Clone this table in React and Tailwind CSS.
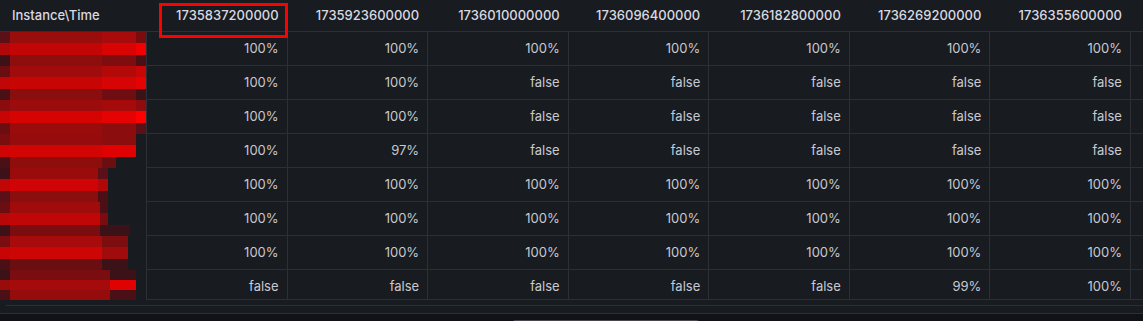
import React from 'react';

const times = [
  '1735837200000',
  '1735923600000',
  '1736010000000',
  '1736096400000',
  '1736182800000',
  '1736269200000',
  '1736355600000',
];

const rows = [
  ['100%', '100%', '100%', '100%', '100%', '100%', '100%'],
  ['100%', '100%', 'false', 'false', 'false', 'false', 'false'],
  ['100%', '100%', 'false', 'false', 'false', 'false', 'false'],
  ['100%', '97%', 'false', 'false', 'false', 'false', 'false'],
  ['100%', '100%', '100%', '100%', '100%', '100%', '100%'],
  ['100%', '100%', '100%', '100%', '100%', '100%', '100%'],
  ['100%', '100%', '100%', '100%', '100%', '100%', '100%'],
  ['false', 'false', 'false', 'false', 'false', '99%', '100%'],
];

// pixelated redaction bands, one set per row: [width, colour] segments
const redact = [
  [
    [[10, 'bg-[#5a1016]'], [92, 'bg-[#9a0d0d]'], [34, 'bg-[#a80b0b]'], [10, 'bg-[#7a0c10]']],
    [[10, 'bg-[#b00808]'], [92, 'bg-[#c20606]'], [34, 'bg-[#d80404]'], [10, 'bg-[#f00000]']],
    [[10, 'bg-[#3c1218]'], [92, 'bg-[#8e0e0e]'], [34, 'bg-[#7e0d10]'], [10, 'bg-[#4a1016]']],
  ],
  [
    [[10, 'bg-[#6a0e12]'], [92, 'bg-[#a00c0c]'], [34, 'bg-[#b40909]'], [10, 'bg-[#c80606]']],
    [[10, 'bg-[#c00606]'], [92, 'bg-[#c80505]'], [34, 'bg-[#d60404]'], [10, 'bg-[#e40202]']],
    [[10, 'bg-[#4a1016]'], [92, 'bg-[#8a0e0e]'], [34, 'bg-[#6e0d12]'], [10, 'bg-[#3a1218]']],
  ],
  [
    [[10, 'bg-[#8a0c0c]'], [92, 'bg-[#9c0c0c]'], [34, 'bg-[#a50b0b]'], [10, 'bg-[#8e0c0e]']],
    [[10, 'bg-[#c80505]'], [92, 'bg-[#d60303]'], [34, 'bg-[#e40202]'], [10, 'bg-[#ff0000]']],
    [[10, 'bg-[#6a0e12]'], [92, 'bg-[#9a0c0c]'], [34, 'bg-[#8c0d0e]'], [10, 'bg-[#5a1016]']],
  ],
  [
    [[10, 'bg-[#7a0d10]'], [92, 'bg-[#960c0c]'], [34, 'bg-[#8c0d0e]'], [0, '']],
    [[10, 'bg-[#d00404]'], [92, 'bg-[#d20404]'], [34, 'bg-[#e00202]'], [0, '']],
    [[10, 'bg-[#4a1016]'], [92, 'bg-[#8e0e0e]'], [14, 'bg-[#6a0e12]'], [0, '']],
  ],
  [
    [[10, 'bg-[#3c1218]'], [88, 'bg-[#9a0c0c]'], [10, 'bg-[#5a1016]'], [0, '']],
    [[10, 'bg-[#c00606]'], [88, 'bg-[#d00404]'], [10, 'bg-[#b00808]'], [0, '']],
    [[10, 'bg-[#5a1016]'], [88, 'bg-[#8a0e0e]'], [10, 'bg-[#4a1016]'], [0, '']],
  ],
  [
    [[10, 'bg-[#6a0e12]'], [90, 'bg-[#a00c0c]'], [8, 'bg-[#4a1016]'], [0, '']],
    [[10, 'bg-[#b80707]'], [90, 'bg-[#c00606]'], [8, 'bg-[#7a0c10]'], [0, '']],
    [[10, 'bg-[#3c1218]'], [90, 'bg-[#7a0d10]'], [30, 'bg-[#3a1218]'], [0, '']],
  ],
  [
    [[10, 'bg-[#7a0d10]'], [92, 'bg-[#a80b0b]'], [26, 'bg-[#7e0d10]'], [0, '']],
    [[10, 'bg-[#c80505]'], [92, 'bg-[#cc0505]'], [26, 'bg-[#a00c0c]'], [0, '']],
    [[10, 'bg-[#4a1016]'], [92, 'bg-[#6a0e12]'], [26, 'bg-[#3a1218]'], [0, '']],
  ],
  [
    [[10, 'bg-[#3c1218]'], [100, 'bg-[#7a0d10]'], [26, 'bg-[#3a1218]'], [0, '']],
    [[10, 'bg-[#9a0c0c]'], [100, 'bg-[#a60b0b]'], [26, 'bg-[#e00202]'], [0, '']],
    [[10, 'bg-[#4a1016]'], [100, 'bg-[#960c0c]'], [26, 'bg-[#4a1016]'], [0, '']],
  ],
];

function Redacted({ bands }) {
  return (
    <div className="flex h-full flex-col">
      {bands.map((band, i) => (
        <div key={i} className="flex flex-1">
          {band.map(([w, c], j) => (w ? <div key={j} className={c} style={{ width: w }} /> : null))}
        </div>
      ))}
    </div>
  );
}

export default function App() {
  return (
    <div
      className="relative h-[321px] w-[1143px] overflow-hidden bg-[#181b1f] text-[13px] text-[#c8c9d1]"
      style={{ fontFamily: 'Inter, "Noto Sans", sans-serif' }}
    >
      <div className="grid grid-cols-[146px_repeat(8,140.57px)]">
        {/* header */}
        <div className="flex h-[32px] items-center border-b border-[#2c2f35] pl-3 font-medium text-[#d8d9e2]">
          Instance\Time
        </div>
        {times.map((t) => (
          <div
            key={t}
            className="flex h-[32px] items-center justify-end border-b border-[#2c2f35] pr-2 font-medium text-[#d8d9e2]"
          >
            {t}
          </div>
        ))}
        {/* next column, scrolled out of view */}
        <div className="h-[32px] border-b border-[#2c2f35]" />

        {rows.map((row, r) => (
          <React.Fragment key={r}>
            <div className={r === 7 ? 'h-[30px] overflow-hidden' : 'h-[34px]'}>
              <Redacted bands={redact[r]} />
            </div>
            {row.map((v, c) => (
              <div
                key={c}
                className={`flex items-center justify-end border-b border-l border-[#2c2f35] pr-2 ${
                  r === 7 ? 'h-[30px] pt-[4px]' : 'h-[34px]'
                }`}
              >
                {v}
              </div>
            ))}
            <div className={`border-b border-l border-[#2c2f35] ${r === 7 ? 'h-[30px]' : 'h-[34px]'}`} />
          </React.Fragment>
        ))}
      </div>

      <div className="mt-[5px] ml-[6px] border-t border-[#2c2f35]" />
      <div className="mt-[7px] border-t border-[#2c2f35]" />
      <div className="flex h-[10px] bg-[#111217]">
        <div className="ml-[512px] mt-[6px] h-[4px] w-[188px] rounded-t-sm bg-[#46484e]" />
      </div>

      {/* highlight box */}
      <div className="absolute left-[159px] top-[3px] h-[35px] w-[129px] border-[3px] border-[#ff0000]" />
    </div>
  );
}
